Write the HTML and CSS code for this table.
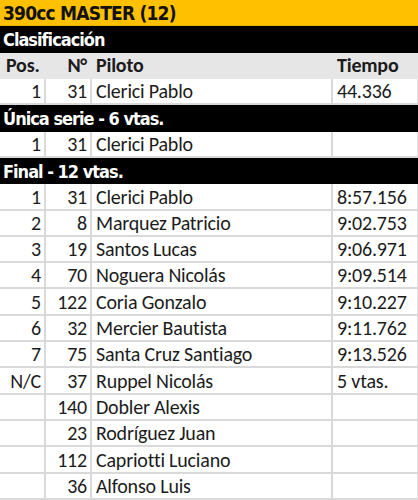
FILE: index.html
```html
<!DOCTYPE html>
<html lang="es">
<head>
<meta charset="utf-8">
<link rel="stylesheet" href="styles.css">
</head>
<body>
<div class="sheet">
  <div class="bar title h26">390cc MASTER (12)</div>
  <div class="bar section h27">Clasificación</div>
  <div class="row head h26">
    <div class="c pos">Pos.</div>
    <div class="c num">N°</div>
    <div class="c name">Piloto</div>
    <div class="c time">Tiempo</div>
  </div>
  <div class="row h26">
    <div class="c pos">1</div><div class="c num">31</div><div class="c name">Clerici Pablo</div><div class="c time">44.336</div>
  </div>
  <div class="bar section h27">Única serie - 6 vtas.</div>
  <div class="row h26">
    <div class="c pos">1</div><div class="c num">31</div><div class="c name">Clerici Pablo</div><div class="c time"></div>
  </div>
  <div class="bar section h26">Final - 12 vtas.</div>
  <div class="row h27">
    <div class="c pos">1</div><div class="c num">31</div><div class="c name">Clerici Pablo</div><div class="c time">8:57.156</div>
  </div>
  <div class="row h26">
    <div class="c pos">2</div><div class="c num">8</div><div class="c name">Marquez Patricio</div><div class="c time">9:02.753</div>
  </div>
  <div class="row h26">
    <div class="c pos">3</div><div class="c num">19</div><div class="c name">Santos Lucas</div><div class="c time">9:06.971</div>
  </div>
  <div class="row h26">
    <div class="c pos">4</div><div class="c num">70</div><div class="c name">Noguera Nicolás</div><div class="c time">9:09.514</div>
  </div>
  <div class="row h27">
    <div class="c pos">5</div><div class="c num">122</div><div class="c name">Coria Gonzalo</div><div class="c time">9:10.227</div>
  </div>
  <div class="row h26">
    <div class="c pos">6</div><div class="c num">32</div><div class="c name">Mercier Bautista</div><div class="c time">9:11.762</div>
  </div>
  <div class="row h26">
    <div class="c pos">7</div><div class="c num">75</div><div class="c name">Santa Cruz Santiago</div><div class="c time">9:13.526</div>
  </div>
  <div class="row h27">
    <div class="c pos">N/C</div><div class="c num">37</div><div class="c name">Ruppel Nicolás</div><div class="c time">5 vtas.</div>
  </div>
  <div class="row h26">
    <div class="c pos"></div><div class="c num">140</div><div class="c name">Dobler Alexis</div><div class="c time"></div>
  </div>
  <div class="row h26">
    <div class="c pos"></div><div class="c num">23</div><div class="c name">Rodríguez Juan</div><div class="c time"></div>
  </div>
  <div class="row h27">
    <div class="c pos"></div><div class="c num">112</div><div class="c name">Capriotti Luciano</div><div class="c time"></div>
  </div>
  <div class="row h26">
    <div class="c pos"></div><div class="c num">36</div><div class="c name">Alfonso Luis</div><div class="c time"></div>
  </div>
</div>
</body>
</html>
```
FILE: styles.css
```css
html, body {
  margin: 0;
  padding: 0;
  background: #ffffff;
}
.sheet {
  width: 418px;
  height: 500px;
  display: flex;
  flex-direction: column;
  overflow: hidden;
  font-family: Carlito, "Calibri", Lato, "Liberation Sans", sans-serif;
  font-size: 20px;
  letter-spacing: -0.2px;
  color: #1c1c1c;
}
.h26 { height: 26px; }
.h27 { height: 27px; }
.bar {
  display: flex;
  align-items: center;
  padding-left: 3px;
  font-family: "DejaVu Sans Condensed", "DejaVu Sans", sans-serif;
  font-stretch: condensed;
  font-weight: bold;
  font-size: 18px;
  letter-spacing: -1px;
  box-sizing: border-box;
}
.title {
  background: #ffc000;
  color: #111;
  font-size: 19px;
  letter-spacing: -0.8px;
  border-bottom: 1px solid #e8b000;
}
.section {
  background: #000;
  color: #fff;
}
.row {
  display: grid;
  grid-template-columns: 46px 46px 241px 85px;
  box-sizing: border-box;
}
.c {
  box-sizing: border-box;
  display: flex;
  align-items: center;
  border-right: 2px solid #d9d9d9;
  border-bottom: 2px solid #d9d9d9;
  white-space: nowrap;
  overflow: hidden;
}
.c.time { border-right: 1px solid #e0e0e0; }
.pos, .num {
  justify-content: flex-end;
  padding-right: 3px;
}
.name { padding-left: 4px; }
.time { padding-left: 4px; }
.head { background: #e7e6e6; font-weight: bold; }
.head .c { border-right-color: #e7e6e6; border-bottom-color: #e7e6e6; }
.head .pos { justify-content: flex-start; padding-left: 6px; }
```
